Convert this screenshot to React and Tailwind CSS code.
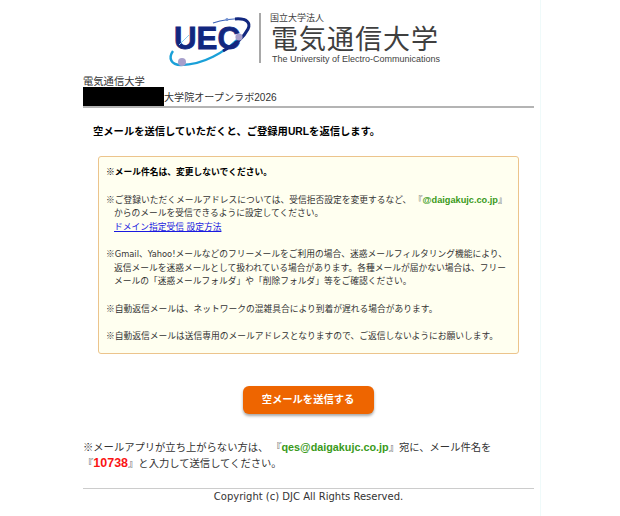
import React from "react";

const jp = "font-['Liberation_Sans','Noto_Sans_CJK_JP',sans-serif]";

function Logo() {
    return (
        <div className="flex items-start h-[75px] pt-[10px] pl-[165px]">
            {/* UEC mark */}
            <svg width="90" height="60" viewBox="0 0 90 60" className="shrink-0">
                <path d="M8 41 C3 48 6 55 16 55 C38 55 60 42 74 28" fill="none" stroke="#1aa0d8" strokeWidth="2.4" />
                <path d="M48 13 C56 10 70 8 80 9" fill="none" stroke="#3c62b8" strokeWidth="1.2" />
                <path d="M70 9 C82 8 86 13 83 19 C79 27 70 35 58 41" fill="none" stroke="#12277f" strokeWidth="3" />
                <text x="9" y="39" fontFamily="Liberation Sans" fontWeight="700" fontSize="31" fill="#12277f" stroke="#12277f" strokeWidth="0.8" textLength="66" lengthAdjust="spacingAndGlyphs">UEC</text>
                <path d="M14 35 L24 25" stroke="#8ccdee" strokeWidth="1" />
                <circle cx="62" cy="9.5" r="1.6" fill="#6f8fd0" />
                <circle cx="74" cy="27" r="3.6" fill="#a79fcb" />
                <circle cx="17" cy="52" r="4" fill="#a79fcb" />
            </svg>
            <div className="w-[2px] h-[50px] bg-[#a8a8a8] mt-[3px] ml-[4px] mr-[9px] shrink-0"></div>
            <div className="flex flex-col text-[#3f3f3f] h-[56px] pt-[3px]">
                <span className={`${jp} text-[9px] leading-[11px]`}>国立大学法人</span>
                <span className="font-['Noto_Sans_CJK_JP',sans-serif] text-[27px] leading-[28px] tracking-[1px] ml-[1px] whitespace-nowrap">電気通信大学</span>
                <span className="font-['Liberation_Sans',sans-serif] text-[9px] leading-[11px] mt-[2px] ml-[2px] whitespace-nowrap">The University of Electro-Communications</span>
            </div>
        </div>
    );
}

function App() {
    return (
        <div className={`${jp} w-[620px] h-[516px] bg-white text-[#222] overflow-hidden`}>
            <div className="w-[541px] h-[516px] border-r border-[#effafa]">
                <Logo />

                <div className="w-[451px] ml-[83px]">
                    {/* HEADER */}
                    <p className="text-[10.3px] leading-[14px] text-[#333]">電気通信大学</p>
                    <div className="flex items-end h-[19px] border-b-2 border-[#b4b4b4]">
                        <span className="w-[81px] h-[19px] bg-black shrink-0"></span>
                        <span className="text-[10.1px] leading-[14px] pb-[1px] text-[#333]">大学院オープンラボ2026</span>
                    </div>

                    <p className="mt-[16px] ml-[10px] text-[10.3px] leading-[16px] font-bold text-black whitespace-nowrap">
                        空メールを送信していただくと、ご登録用URLを返信します。
                    </p>

                    {/* NOTICE */}
                    <div className="mt-[16px] ml-[15px] w-[421px] h-[198px] bg-[#fffff0] border border-[#ecc48c] rounded-[3px] pt-[9px] pl-[7px] text-[8.75px] leading-[13.5px] text-[#333] whitespace-nowrap">
                        <p className="font-bold text-black">※メール件名は、変更しないでください。</p>
                        <p className="mt-[14px]">
                            ※ご登録いただくメールアドレスについては、受信拒否設定を変更するなど、 『<span className="text-[#3a9a1a] font-bold text-[9.2px]">@daigakujc.co.jp</span>』
                        </p>
                        <p className="pl-[8px]">からのメールを受信できるように設定してください。</p>
                        <p className="pl-[8px]"><a className="text-[#1a1ae0] underline">ドメイン指定受信 設定方法</a></p>
                        <p className="mt-[14px]">
                            ※<span className="font-['DejaVu_Sans',sans-serif] text-[8.3px]">Gmail</span>、<span className="font-['DejaVu_Sans',sans-serif] text-[8.3px]">Yahoo!</span>メールなどのフリーメールをご利用の場合、迷惑メールフィルタリング機能により、
                        </p>
                        <p className="pl-[8px]">返信メールを迷惑メールとして扱われている場合があります。各種メールが届かない場合は、フリー</p>
                        <p className="pl-[8px]">メールの「迷惑メールフォルダ」や「削除フォルダ」等をご確認ください。</p>
                        <p className="mt-[14px]">※自動返信メールは、ネットワークの混雑具合により到着が遅れる場合があります。</p>
                        <p className="mt-[14px]">※自動返信メールは送信専用のメールアドレスとなりますので、ご返信しないようにお願いします。</p>
                    </div>

                    {/* BUTTON */}
                    <div className="flex justify-center mt-[32px] -ml-[1px]">
                        <button className="w-[131px] h-[28px] bg-[#ee6500] rounded-[6px] text-white text-[10.3px] font-bold shadow-[0_2px_3px_rgba(0,0,0,0.35)]">
                            空メールを送信する
                        </button>
                    </div>

                    <div className="mt-[25px] text-[10.3px] leading-[16px] text-[#333] whitespace-nowrap">
                        <p>
                            ※メールアプリが立ち上がらない方は、 『<span className="text-[#3a9a1a] font-bold text-[10.8px]">qes@daigakujc.co.jp</span>』宛に、メール件名を
                        </p>
                        <p>
                            『<span className="text-[#fa1414] font-bold text-[12.5px] leading-none">10738</span>』と入力して送信してください。
                        </p>
                    </div>

                    {/* FOOTER */}
                    <div className="mt-[16px] border-t border-[#ccc] pt-[1px] text-center font-['DejaVu_Sans',sans-serif] text-[10px] leading-[14px] text-[#333]">
                        Copyright (c) DJC All Rights Reserved.
                    </div>
                </div>
            </div>
        </div>
    );
}

export default App;
